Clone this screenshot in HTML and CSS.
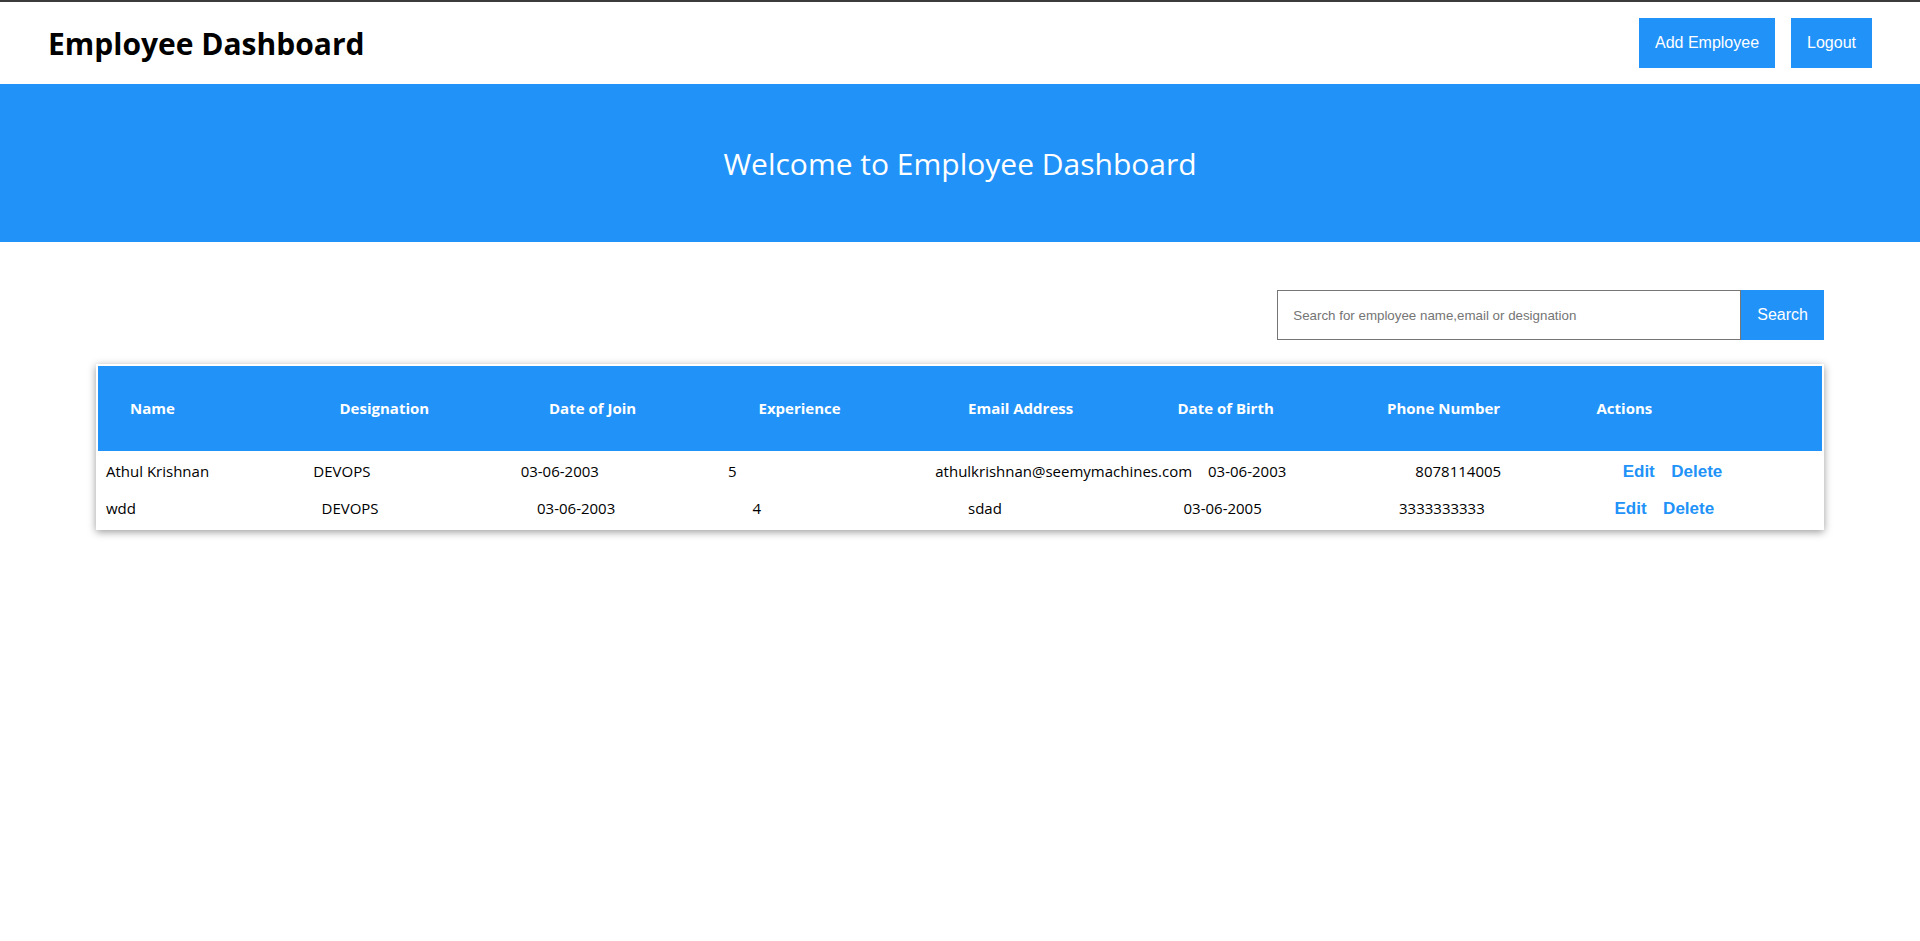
FILE: index.html
```html
<!DOCTYPE html>
<html lang="en">
<head>
<meta charset="utf-8">
<title>Employee Dashboard</title>
<link rel="stylesheet" href="styles.css">
</head>
<body>
<header class="topbar">
  <h1 class="brand">Employee Dashboard</h1>
  <nav class="top-actions">
    <button class="btn">Add Employee</button>
    <button class="btn">Logout</button>
  </nav>
</header>
<section class="hero">
  <h2 class="hero-title">Welcome to Employee Dashboard</h2>
</section>
<main class="content">
  <div class="search-row">
    <input class="search-input" type="text" placeholder="Search for employee name,email or designation">
    <button class="btn search-btn">Search</button>
  </div>
  <div class="table-card" role="table">
    <div class="head-row" role="row">
      <div class="th" role="columnheader">Name</div>
      <div class="th" role="columnheader">Designation</div>
      <div class="th" role="columnheader">Date of Join</div>
      <div class="th" role="columnheader">Experience</div>
      <div class="th" role="columnheader">Email Address</div>
      <div class="th" role="columnheader">Date of Birth</div>
      <div class="th" role="columnheader">Phone Number</div>
      <div class="th" role="columnheader">Actions</div>
    </div>
    <div class="body-row" role="row">
      <div class="td" role="cell">Athul Krishnan</div>
      <div class="td" role="cell">DEVOPS</div>
      <div class="td" role="cell">03-06-2003</div>
      <div class="td" role="cell">5</div>
      <div class="td" role="cell">athulkrishnan@seemymachines.com</div>
      <div class="td" role="cell">03-06-2003</div>
      <div class="td" role="cell">8078114005</div>
      <div class="td actions" role="cell"><button class="link-btn">Edit</button><button class="link-btn">Delete</button></div>
    </div>
    <div class="body-row" role="row">
      <div class="td" role="cell">wdd</div>
      <div class="td" role="cell">DEVOPS</div>
      <div class="td" role="cell">03-06-2003</div>
      <div class="td" role="cell">4</div>
      <div class="td" role="cell">sdad</div>
      <div class="td" role="cell">03-06-2005</div>
      <div class="td" role="cell">3333333333</div>
      <div class="td actions" role="cell"><button class="link-btn">Edit</button><button class="link-btn">Delete</button></div>
    </div>
  </div>
</main>
</body>
</html>
```

FILE: styles.css
```css
body {
  margin: 0;
  font-family: "Open Sans", sans-serif;
  background: #fff;
  color: #000;
}

.topbar {
  display: flex;
  align-items: center;
  justify-content: space-between;
  padding: 16px 48px;
  border-top: 2px solid #3b3b3b;
  background: #fff;
}

.brand {
  margin: 0;
  font-size: 30px;
  font-weight: 700;
  line-height: 41px;
  color: #000;
}

.top-actions {
  display: flex;
  gap: 16px;
}

.btn {
  font-family: "Liberation Sans", Arial, sans-serif;
  font-size: 16px;
  line-height: 18px;
  padding: 16px;
  border: 0;
  background: #2192f8;
  color: #fff;
}

.hero {
  background: #2192f8;
  height: 158px;
  display: flex;
  align-items: center;
  justify-content: center;
}

.hero-title {
  margin: 0;
  font-size: 30px;
  font-weight: 400;
  color: #fff;
}

.content {
  width: 90%;
  margin: 48px auto 0;
  padding-bottom: 40px;
}

.search-row {
  display: flex;
  justify-content: flex-end;
  margin-bottom: 24px;
}

.search-input {
  width: 464px;
  height: 50px;
  box-sizing: border-box;
  border: 1px solid #767676;
  padding: 0 15px;
  font-family: "Liberation Sans", Arial, sans-serif;
  font-size: 13.33px;
  color: #000;
  outline: none;
}

.search-input::placeholder {
  color: #757575;
}

.search-btn {
  height: 50px;
  padding: 0 16px;
}

.table-card {
  padding: 2px;
  background: #fff;
  box-shadow: 0 2px 8px rgba(0, 0, 0, 0.4);
}

.head-row,
.body-row {
  display: flex;
}

.head-row {
  background: #2192f8;
  padding: 24px;
  margin-bottom: 2px;
}

.th,
.td {
  flex: 1 1 0;
  padding: 8px;
  text-align: left;
}

.th {
  color: #fff;
  font-size: 15px;
  font-weight: 700;
  line-height: 21px;
}

.td {
  font-size: 15px;
  line-height: 21.3px;
  color: #000;
}

.td.actions {
  display: flex;
  align-items: center;
  gap: 16.5px;
}

.link-btn {
  font-family: "Liberation Sans", Arial, sans-serif;
  font-size: 17px;
  font-weight: 700;
  color: #2192f8;
  background: none;
  border: 0;
  padding: 0;
}
```
